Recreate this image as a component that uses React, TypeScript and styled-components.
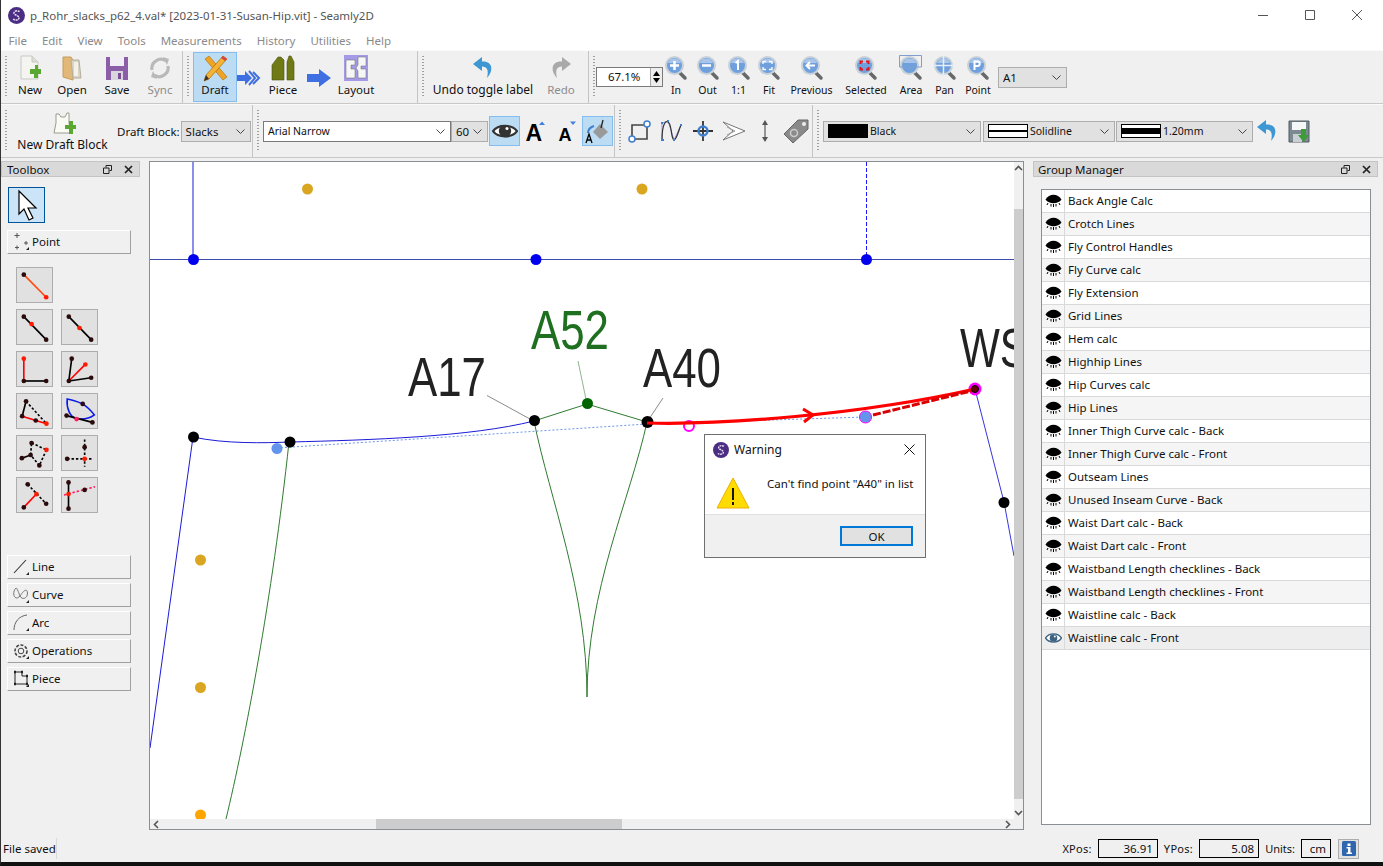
import React from 'react'
import styled, { createGlobalStyle } from 'styled-components'

const menus = ['File', 'Edit', 'View', 'Tools', 'Measurements', 'History', 'Utilities', 'Help']

const groups = [
	'Back Angle Calc', 'Crotch Lines', 'Fly Control Handles', 'Fly Curve calc', 'Fly Extension', 'Grid Lines', 'Hem calc',
	'Highhip Lines', 'Hip Curves calc', 'Hip Lines', 'Inner Thigh Curve calc - Back', 'Inner Thigh Curve calc - Front',
	'Outseam Lines', 'Unused Inseam Curve - Back', 'Waist Dart calc - Back', 'Waist Dart calc - Front',
	'Waistband Length checklines - Back', 'Waistband Length checklines - Front', 'Waistline calc - Back', 'Waistline calc - Front',
]

const DK = '#2a0a0a'
const RD = '#ff1a00'

type Seg = [number, number, number, number, string, boolean?]
type Dot = [number, number, string]
type PointTool = { lines: Seg[]; dots: Dot[]; blue?: string }

const pointTools: (PointTool | null)[] = [
	{ lines: [[7, 6.3, 30, 29.6, '#ff4a10']], dots: [[7, 6.3, DK], [30, 29.6, RD]] },
	null,
	{ lines: [[7, 6.3, 30, 30, '#000']], dots: [[7, 6.3, DK], [15, 14, RD], [30, 30, DK]] },
	{ lines: [[7, 6.3, 30, 30, '#000']], dots: [[7, 6.3, DK], [18, 18, RD], [30, 30, DK]] },
	{ lines: [[7, 6.3, 7, 29.3, '#f00'], [7, 29.3, 30, 29.3, '#000']], dots: [[7, 6.3, RD], [7, 29.3, DK], [30, 29.3, DK]] },
	{ lines: [[7, 29.3, 10, 6.3, '#000'], [7, 29.3, 24, 12.3, '#f00'], [7, 29.3, 30, 26, '#000']], dots: [[10, 6.3, DK], [24, 12.3, RD], [30, 26, DK], [7, 29.3, DK]] },
	{ lines: [[9.3, 7, 5.3, 22.3, '#000'], [9.3, 7, 30.3, 30, '#000', true], [5.3, 22.3, 30.3, 30, '#f00']], dots: [[9.3, 7, DK], [5.3, 22.3, DK], [19.3, 26.7, DK], [30.3, 30, RD]] },
	{ lines: [[4.7, 21.7, 31.3, 28.7, '#000']], dots: [[21.3, 9.7, DK], [4.7, 21.7, DK], [31.3, 28.7, DK], [15, 25.3, '#ff2060']], blue: 'M5.3 4.7C4.5 14 8 23 15 25C22 26 28 25 33.3 21C30 17 25 12 21.3 9.7C16 7.5 10 5.5 5.3 4.7Z' },
	{ lines: [[5, 22.3, 14, 19, '#000'], [15, 6.7, 30.3, 13.7, '#000', true], [30.3, 13.7, 23, 29.7, '#000', true], [23, 29.7, 14, 19, '#000', true], [14, 19, 15, 6.7, '#000', true]], dots: [[15, 6.7, DK], [30.3, 13.7, RD], [23, 29.7, DK], [14, 19, DK], [5, 22.3, DK]] },
	{ lines: [[23.3, 3, 23.3, 31, '#000', true], [5.3, 23, 32, 23, '#000', true]], dots: [[23.3, 11, DK], [5.3, 23, DK], [23.3, 23, RD]] },
	{ lines: [[11, 6, 30, 26, '#000', true], [7, 29.7, 20, 16, '#f00']], dots: [[11, 6, DK], [30, 26, DK], [20, 16, RD], [7, 29.7, DK]] },
	{ lines: [[6.7, 4, 6.7, 31, '#000'], [2, 17, 34, 8.5, '#ff2060', true]], dots: [[6.7, 4, DK], [6.7, 31, DK], [6.7, 16, RD], [23.3, 11.7, DK]] },
]

const Logo = ({ size = 17 }: { size?: number }) => (
	<svg width={size} height={size} viewBox="0 0 17 17">
		<circle cx="8.5" cy="8.5" r="8.5" fill="#4b2e83" />
		<path d="M11.5 4.6C10 3.4 6.4 3.6 6 5.8C5.6 8 11 8.4 11 11C11 13.2 7 13.6 5.2 12.2" fill="none" stroke="#e8e2f2" strokeWidth="1.5" strokeDasharray="2 .7" />
	</svg>
)

const NewIcon = () => (
	<svg width="24" height="28" viewBox="0 0 24 28">
		<path d="M3 2H14L20 8V25H3Z" fill="#f4f4f0" stroke="#c9c9c4" />
		<path d="M14 2V8H20" fill="#dcdcd6" stroke="#c9c9c4" />
		<path d="M13 15H18V11H18H21V15H24V20H21V24H17V20H13Z" fill="#5aa832" transform="translate(-1 0)" />
	</svg>
)

const OpenIcon = () => (
	<svg width="24" height="28" viewBox="0 0 24 28">
		<path d="M3 3H11L13 6V26L3 23Z" fill="#e2b878" stroke="#c59c5c" />
		<path d="M11 6H19L21 24H13Z" fill="#d9d4c6" stroke="#b3ae9f" />
		<path d="M14 8H18V22H14Z" fill="#f4f1e8" />
	</svg>
)

const SaveIcon = () => (
	<svg width="26" height="28" viewBox="0 0 26 28">
		<path d="M2 3H24V26H2Z" fill="#8d5ea8" />
		<path d="M6 3H20V12H6Z" fill="#f2eef5" />
		<path d="M7 17H19V26H7Z" fill="#d9d5dc" />
		<path d="M14 19H17V25H14Z" fill="#7b4e96" />
	</svg>
)

const SyncIcon = () => (
	<svg width="26" height="28" viewBox="0 0 26 28" fill="none" stroke="#b9b9b9" strokeWidth="3.2">
		<path d="M5 16A9 9 0 0 1 19 7" />
		<path d="M21 12A9 9 0 0 1 7 21" />
		<path d="M16 3L22 5L20 11Z" fill="#b9b9b9" stroke="none" />
		<path d="M10 25L4 23L6 17Z" fill="#b9b9b9" stroke="none" />
	</svg>
)

const DraftIcon = () => (
	<svg width="28" height="30" viewBox="0 0 28 30">
		<path d="M4 6L8 3L26 24L22 27Z" fill="#f0a424" stroke="#b87510" strokeWidth=".7" />
		<path d="M22 3L26 6L8 26L3 28L5 22Z" fill="#f5b335" stroke="#a96c12" strokeWidth=".7" />
		<path d="M22 3L26 6L24 8L20 5Z" fill="#d8443a" />
		<path d="M3 28L5 22L8 26Z" fill="#3c3228" />
	</svg>
)

const DoubleArrow = () => (
	<svg width="24" height="16" viewBox="0 0 24 16">
		<path d="M0 5H8V1L15 8L8 15V11H0Z" fill="#3f6fe0" />
		<path d="M16 2L22 8L16 14M12 1L18 8L12 15" fill="none" stroke="#3f6fe0" strokeWidth="2" />
	</svg>
)

const BigArrow = () => (
	<svg width="24" height="18" viewBox="0 0 24 18">
		<path d="M0 5H12V0L24 9L12 18V13H0Z" fill="#3f6fe0" />
	</svg>
)

const PieceIcon = () => (
	<svg width="26" height="28" viewBox="0 0 26 28">
		<path d="M2 26V11L8 3H11L14 6V26Z" fill="#6f7a14" stroke="#4b5210" strokeWidth=".6" />
		<path d="M17 26V8L19 2H21L24 8V26Z" fill="#6f7a14" stroke="#4b5210" strokeWidth=".6" />
	</svg>
)

const LayoutIcon = () => (
	<svg width="26" height="28" viewBox="0 0 26 28">
		<path d="M1 1H25V27H1Z" fill="#a59ae8" />
		<path d="M3 6H12V11H8V15H12V24H3Z" fill="#f6f6f6" stroke="#666" strokeWidth=".5" />
		<path d="M15 3H23V12H18V15H23V24H15V17L13 14L15 11Z" fill="#f6f6f6" stroke="#666" strokeWidth=".5" />
	</svg>
)

const UndoIcon = ({ color = '#3d97d3' }: { color?: string }) => (
	<svg width="22" height="24" viewBox="0 0 22 24">
		<path d="M10 1L1 8L10 15V10.500C15 10.500 17 14 15 22C21 16 22 5 10 5.500Z" fill={color} />
	</svg>
)

const RedoIcon = () => (
	<svg width="22" height="24" viewBox="0 0 22 24">
		<path d="M12 1L21 8L12 15V10.500C7 10.500 5 14 7 22C1 16 0 5 12 5.500Z" fill="#a9a9a9" />
	</svg>
)

const ZoomGlass = ({ children }: { children?: React.ReactNode }) => (
	<svg width="24" height="26" viewBox="0 0 24 26">
		<path d="M15 17L21 23" stroke="#66686a" strokeWidth="3.500" strokeLinecap="round" />
		<circle cx="10.500" cy="10.500" r="9.500" fill="#c8d0d8" />
		<circle cx="10.500" cy="10.500" r="7.500" fill="#6f9fdc" />
		<path d="M4 8A7 7 0 0 1 17 8Z" fill="#a9c6ea" />
		{children}
	</svg>
)

const zoomTools: { label: string; w: number; mark: React.ReactNode }[] = [
	{ label: 'In', w: 32, mark: <path d="M10.500 6V15M6 10.500H15" stroke="#fff" strokeWidth="2.500" /> },
	{ label: 'Out', w: 31, mark: <path d="M6 10.500H15" stroke="#fff" strokeWidth="2.500" /> },
	{ label: '1:1', w: 31, mark: <path d="M8.500 8L11 6V15" fill="none" stroke="#fff" strokeWidth="2" /> },
	{ label: 'Fit', w: 30, mark: <path d="M6 9V6.500H9M12 6.500H15V9M15 12V14.500H12M9 14.500H6V12" fill="none" stroke="#fff" strokeWidth="1.300" /> },
	{ label: 'Previous', w: 55, mark: <path d="M15 10.500H7M10 7L6.500 10.500L10 14" fill="none" stroke="#fff" strokeWidth="2" /> },
	{ label: 'Selected', w: 54, mark: <path d="M6.500 9V6.500H9M12 6.500H14.500V9M14.500 12V14.500H12M9 14.500H6.500V12" fill="none" stroke="#e0141c" strokeWidth="2" /> },
	{ label: 'Area', w: 36, mark: <path d="M0.500 0.500H22.500V12H0.500Z" fill="none" stroke="#7f9fcf" /> },
	{ label: 'Pan', w: 31, mark: <path d="M10.500 1V20M1 10.500H20" stroke="#e8eef8" strokeWidth="1.500" /> },
	{ label: 'Point', w: 36, mark: <path d="M8.500 15V6.500H12A2.300 2.300 0 0 1 12 11H8.500" fill="none" stroke="#fff" strokeWidth="2" /> },
]

const FontSizeIcon = ({ size, x, up }: { size: number; x: number; up: boolean }) => (
	<svg width="28" height="32" viewBox="0 0 28 32">
		<text x={x} y="25.500" fontFamily="'Liberation Sans', sans-serif" fontWeight="700" fontSize={size} fill="#000">A</text>
		<path d={up ? 'M17 10L20 6.500L23 10Z' : 'M17 6.500H23L20 10Z'} fill="#3f7fe0" />
	</svg>
)

const EyeIcon = ({ color = '#333', w = 26 }: { color?: string; w?: number }) => (
	<svg width={w} height={w * 0.7} viewBox="0 0 26 18">
		<path d="M1 9C6 2 20 2 25 9C20 16 6 16 1 9Z" fill="#fff" stroke={color} strokeWidth="2.200" />
		<circle cx="13" cy="9" r="6.200" fill={color} />
		<circle cx="15" cy="6.500" r="1.500" fill="#fff" />
	</svg>
)

const ClosedEye = () => (
	<svg width="17" height="14" viewBox="0 0 17 14">
		<path d="M0.500 5.500C4 -1 13 -1 16.500 5.500C13 10.500 4 10.500 0.500 5.500Z" fill="#000" />
		<path d="M3 9L2 11M6 10V12.500M8.500 10V13M11 10V12.500M14 9L15 11" stroke="#000" />
	</svg>
)

const BlueEye = () => (
	<svg width="17" height="14" viewBox="0 0 17 14">
		<path d="M0.500 7C4 1.500 13 1.500 16.500 7C13 12.500 4 12.500 0.500 7Z" fill="#fff" stroke="#3d6380" strokeWidth="1.400" />
		<circle cx="8.500" cy="7" r="3.800" fill="#3d6380" />
		<circle cx="9.800" cy="5.500" r="1" fill="#fff" />
	</svg>
)

const rowTwoIcons = [
	<svg width="26" height="26" viewBox="0 0 26 26" key="a">
		<path d="M4 7H19V21H4Z" fill="none" stroke="#444" strokeWidth="1.600" />
		<circle cx="19" cy="6" r="3" fill="#fff" stroke="#3f7fd0" strokeWidth="1.500" />
		<circle cx="4" cy="21" r="3" fill="#fff" stroke="#3f7fd0" strokeWidth="1.500" />
	</svg>,
	<svg width="26" height="26" viewBox="0 0 26 26" key="b">
		<path d="M3 23V5L9 3L15 22L22 7" fill="none" stroke="#8a7fe0" strokeWidth=".8" />
		<path d="M3 23C3 5 7 1 10 5C13 9 12 21 15 22C18 21 19 14 22 7" fill="none" stroke="#333" strokeWidth="1.200" />
		<path d="M3 23V21H5V23ZM2 6V4H4V6ZM8 4V2H10V4ZM14 23V21H16V23ZM21 8V6H23V8Z" fill="#3f7fd0" />
	</svg>,
	<svg width="26" height="26" viewBox="0 0 26 26" key="c">
		<path d="M13 3V23M3 13H23" stroke="#333" strokeWidth="1.800" />
		<circle cx="13" cy="13" r="4.500" fill="none" stroke="#3f7fd0" strokeWidth="2.400" />
	</svg>,
	<svg width="26" height="26" viewBox="0 0 26 26" key="d">
		<path d="M2 4L24 13L2 22L12 13Z" fill="#fff" stroke="#777" strokeWidth="1" />
		<path d="M6 9L14 13L6 17" fill="none" stroke="#999" />
	</svg>,
	<svg width="14" height="26" viewBox="0 0 14 26" key="e">
		<path d="M7 4V22" stroke="#777" strokeWidth="1.500" />
		<path d="M7 2L10 7H4ZM7 24L10 19H4Z" fill="#555" />
	</svg>,
	<svg width="28" height="26" viewBox="0 0 28 26" key="f">
		<path d="M2 16L16 2H26V11L11 25Z" fill="#8a8a8a" stroke="#666" />
		<circle cx="22" cy="6" r="2" fill="#eee" />
		<circle cx="12" cy="15" r="3.500" fill="none" stroke="#ccc" strokeWidth="1.500" />
	</svg>,
]

const toolGroups: { label: string; icon: React.ReactNode }[] = [
	{ label: 'Line', icon: <path d="M2 16L14 3" stroke="#333" strokeWidth="1.100" /> },
	{ label: 'Curve', icon: <path d="M4 3C-1 8 3 17 8 11C12 5 15 3 15.500 8C15.500 14 10 15 8 11C6 6 5 3 4 3Z" fill="none" stroke="#777" /> },
	{ label: 'Arc', icon: <path d="M2 17C2 9 7 3 15 2" fill="none" stroke="#666" /> },
	{ label: 'Operations', icon: <g fill="none" stroke="#444"><circle cx="9" cy="10" r="2.800" /><circle cx="9" cy="10" r="6" strokeDasharray="3 1.500" strokeWidth="1.600" /></g> },
	{ label: 'Piece', icon: <g fill="none" stroke="#222"><path d="M3 3V15H15V7H10V3Z" /><path d="M2 3H4M2 15H4M14 15H16M9 3H11M14 7H16" strokeWidth="2.400" /></g> },
]

const PointIcon = () => (
	<svg width="20" height="20" viewBox="0 0 20 20">
		<path d="M5 1V6M2.500 3.500H7.500M3 15.500H7M5 13.500V17.500M14 9V13M12 11H16" stroke="#555" />
	</svg>
)

const Canvas = () => (
	<svg width="100%" height="100%" viewBox="150 162 864 657" preserveAspectRatio="none">
		<g fill="none">
			<path d="M193 162V259" stroke="#1a1ad8" />
			<path d="M866.500 162V259" stroke="#1a1aff" strokeDasharray="4 2" />
			<path d="M150 259.500H1014" stroke="#3c4ca8" />
			<path d="M193 437C225 444 265 443 290 442C370 440 470 437 534 421" stroke="#1a1ad8" />
			<path d="M193 437L150 748" stroke="#1a1ad8" />
			<path d="M975 389L1004 502L1014 556" stroke="#3535e0" />
			<path d="M534 421L587 404L647 422" stroke="#2f7a2f" />
			<path d="M534 421C550 500 587 590 587 697C587 590 630 500 647 422" stroke="#2f7a2f" />
			<path d="M289 442C272 600 245 740 226 819" stroke="#2f7a2f" />
			<path d="M277 448L647 424L865 417" stroke="#6d96e8" strokeDasharray="2 2" />
			<path d="M487 395.500L530 419M663 398L647 422" stroke="#8c8c8c" />
			<path d="M578 361L587 404" stroke="#90b490" />
		</g>
		<g fontFamily="'Liberation Sans', Arial, sans-serif" fontSize="55" fill="#222">
			<text x="408" y="396" textLength="78" lengthAdjust="spacingAndGlyphs">A17</text>
			<text x="531" y="349" textLength="78" lengthAdjust="spacingAndGlyphs" fill="#1e7020">A52</text>
			<text x="643" y="387" textLength="78" lengthAdjust="spacingAndGlyphs">A40</text>
			<text x="960" y="367" textLength="68" lengthAdjust="spacingAndGlyphs">WS</text>
		</g>
		<g fill="#daa520">
			<circle cx="307.500" cy="189" r="5.500" />
			<circle cx="642" cy="189" r="5.500" />
			<circle cx="200.500" cy="560" r="5.500" />
			<circle cx="200.500" cy="687.500" r="5.500" />
			<circle cx="200.500" cy="815" r="5.500" fill="#ffa500" />
		</g>
		<g fill="#0000ee">
			<circle cx="193.500" cy="259.500" r="5.500" />
			<circle cx="536" cy="259.500" r="5.500" />
			<circle cx="866.500" cy="259.500" r="5.500" />
		</g>
		<g fill="#000">
			<circle cx="193.500" cy="437" r="5.500" />
			<circle cx="290" cy="442" r="5.500" />
			<circle cx="534.500" cy="420.500" r="5.500" />
			<circle cx="647.500" cy="422" r="6" />
			<circle cx="1004" cy="502.500" r="5.500" />
		</g>
		<circle cx="587.500" cy="403.500" r="5.500" fill="#006400" />
		<circle cx="277" cy="448.500" r="5.500" fill="#6495ed" />
		<circle cx="865.500" cy="417" r="6" fill="#6495ed" stroke="#f0f" />
		<circle cx="689" cy="426" r="5" fill="#fff" stroke="#f0f" strokeWidth="2" />
		<circle cx="975" cy="389" r="6.500" fill="#f0f" />
		<g fill="none">
			<path d="M647 423C720 425 860 415 975 389" stroke="#f00" strokeWidth="3.200" />
			<path d="M803 409L813 415L804 422" stroke="#f00" strokeWidth="3" />
			<path d="M873 415L975 390" stroke="#d80000" strokeWidth="3" strokeDasharray="8 2" />
		</g>
		<circle cx="975" cy="389" r="3.500" fill="#600" stroke="#000" />
	</svg>
)

const App = () => {
	return (
		<Frame>
			<GlobalStyle />
			<TitleBar>
				<TitleLeft>
					<Logo />
					<span>p_Rohr_slacks_p62_4.val* [2023-01-31-Susan-Hip.vit] - Seamly2D</span>
				</TitleLeft>
				<WindowButtons>
					<svg width="10" height="10" viewBox="0 0 10 10"><path d="M0 5.500H10" stroke="#555" /></svg>
					<svg width="10" height="10" viewBox="0 0 10 10"><path d="M.5 .5H9.500V9.500H.5Z" fill="none" stroke="#555" /></svg>
					<svg width="10" height="10" viewBox="0 0 10 10"><path d="M0 0L10 10M10 0L0 10" stroke="#555" /></svg>
				</WindowButtons>
			</TitleBar>

			<MenuBar>
				{menus.map((m) => <MenuItem key={m}>{m}</MenuItem>)}
			</MenuBar>

			<ToolRow>
				<Section $w={182}>
					<Handle />
					<ToolButton $w={36}><IconSlot><NewIcon /></IconSlot>New</ToolButton>
					<ToolButton $w={48}><IconSlot><OpenIcon /></IconSlot>Open</ToolButton>
					<ToolButton $w={42}><IconSlot><SaveIcon /></IconSlot>Save</ToolButton>
					<ToolButton $w={44} $muted><IconSlot><SyncIcon /></IconSlot>Sync</ToolButton>
				</Section>
				<Section $w={235}>
					<Handle />
					<ToolButton $w={44} $active $gapLeft={-1}><IconSlot><DraftIcon /></IconSlot>Draft</ToolButton>
					<ArrowSlot $w={23}><DoubleArrow /></ArrowSlot>
					<ToolButton $w={44}><IconSlot><PieceIcon /></IconSlot>Piece</ToolButton>
					<ArrowSlot $w={27}><BigArrow /></ArrowSlot>
					<ToolButton $w={48}><IconSlot><LayoutIcon /></IconSlot>Layout</ToolButton>
				</Section>
				<Section $w={171}>
					<Handle />
					<ToolButton $w={106} $gapLeft={1} $size={12}><IconSlot><UndoIcon /></IconSlot>Undo toggle label</ToolButton>
					<ToolButton $w={42} $muted $gapLeft={4}><IconSlot><RedoIcon /></IconSlot>Redo</ToolButton>
				</Section>
				<Section $grow>
					<Handle />
					<SpinBox>
						<span>67.1%</span>
						<SpinArrows>
							<svg width="9" height="7" viewBox="0 0 9 7"><path d="M4.500 1L8 6H1Z" fill="#000" /></svg>
							<svg width="9" height="7" viewBox="0 0 9 7"><path d="M4.500 6L8 1H1Z" fill="#000" /></svg>
						</SpinArrows>
					</SpinBox>
					<ZoomTools>
						{zoomTools.map((t) => (
							<ToolButton key={t.label} $w={t.w} $size={10.5}><IconSlot><ZoomGlass>{t.mark}</ZoomGlass></IconSlot>{t.label}</ToolButton>
						))}
					</ZoomTools>
					<Select $w={69} $gapLeft={2}>A1<Chevron /></Select>
				</Section>
			</ToolRow>

			<ToolRow>
				<Section $w={252}>
					<Handle />
					<DraftButton>
						<svg width="26" height="26" viewBox="0 0 26 26">
							<path d="M6 3H9L11 6L15 6L17 2H19V12L21 22H4L6 12Z" fill="#fbfbf6" stroke="#9a9a8f" />
							<path d="M15 14H19V10H23V14H26V18H23V23H19V18H15Z" fill="#5aa832" />
						</svg>
						New Draft Block
					</DraftButton>
					<FieldLabel>Draft Block:</FieldLabel>
					<Select $w={70} $gapLeft={1}>Slacks<Chevron /></Select>
				</Section>
				<Section $w={362}>
					<Handle />
					<Select $w={188} $white $small $gapLeft={-1}>Arial Narrow<Chevron /></Select>
					<Select $w={37}>60<Chevron /></Select>
					<IconButton $active $gapLeft={1}><EyeIcon /></IconButton>
					<IconPad $w={32}><FontSizeIcon size={23} x={3.5} up /></IconPad>
					<IconPad $w={30}><FontSizeIcon size={18} x={5.5} up={false} /></IconPad>
					<IconButton $active>
						<svg width="26" height="26" viewBox="0 0 26 26">
							<path d="M15 6L23 14L15 21L8 14Z" fill="#999" />
							<path d="M16 10L18 2" stroke="#222" strokeWidth="1.300" />
							<path d="M3 15C3 11 6 9 9 8" fill="none" stroke="#3f7fd0" strokeWidth="2" />
							<path d="M1 25L4 16L7 25M2.200 22H5.800" fill="none" stroke="#000" strokeWidth="1.300" />
						</svg>
					</IconButton>
				</Section>
				<Section $w={198} $pad={10}>
					<Handle />
					{rowTwoIcons.map((icon) => <IconPad key={icon.key} $w={31}>{icon}</IconPad>)}
				</Section>
				<Section $grow $flat>
					<Handle />
					<Select $w={158} $gapLeft={-1} $small>
						<LineSwatch $kind="color" />Black<Chevron />
					</Select>
					<Select $w={132} $gapLeft={2} $small>
						<LineSwatch $kind="line" />Solidline<Chevron />
					</Select>
					<Select $w={137} $gapLeft={1} $small>
						<LineSwatch $kind="weight" />1.20mm<Chevron />
					</Select>
					<IconPad $w={28}><UndoIcon /></IconPad>
					<IconPad $w={28} $gapLeft={4}>
						<svg width="22" height="24" viewBox="0 0 22 24">
							<path d="M1 2H21V23H1Z" fill="#7d8a92" stroke="#4f5a62" />
							<path d="M4 3H18V11H4Z" fill="#f4f6f7" />
							<path d="M5 15H14V23H5Z" fill="#c9d0d4" />
							<path d="M13 10H18V16H21L15.500 23L10 16H13Z" fill="#3f9a3a" />
						</svg>
					</IconPad>
				</Section>
			</ToolRow>

			<Main>
				<Toolbox>
					<DockHeader $w={139}>
						Toolbox
						<DockActions><DockIcons /></DockActions>
					</DockHeader>
					<ArrowTool>
						<svg width="28" height="34" viewBox="0 0 28 34">
							<path d="M6 3V26L11 21L16 32L20 30L15 20H23Z" fill="#fff" stroke="#000" strokeWidth="1.200" />
						</svg>
					</ArrowTool>
					<GroupButton $mt={7}><IconLeft><PointIcon /></IconLeft>Point<Corner /></GroupButton>
					<PointGrid>
						{pointTools.map((tool, i) => tool ? (
							<PointButton key={i}>
								<svg width="36" height="36" viewBox="0 0 36 36">
									{tool.blue && <path d={tool.blue} fill="none" stroke="#0a1ae8" strokeWidth="1.600" />}
									{tool.lines.map((s, j) => (
										<line key={j} x1={s[0]} y1={s[1]} x2={s[2]} y2={s[3]} stroke={s[4]} strokeWidth="1.700" strokeDasharray={s[5] ? '2.500 2' : undefined} />
									))}
									{tool.dots.map((d, j) => <circle key={j} cx={d[0]} cy={d[1]} r="2.400" fill={d[2]} />)}
								</svg>
							</PointButton>
						) : <span key={i} />)}
					</PointGrid>
					<GroupList>
						{toolGroups.map((g) => (
							<GroupButton key={g.label}>
								<IconLeft><svg width="18" height="20" viewBox="0 0 18 20">{g.icon}</svg></IconLeft>
								{g.label}
								<Corner />
							</GroupButton>
						))}
					</GroupList>
				</Toolbox>

				<CanvasFrame>
					<CanvasArea><Canvas /></CanvasArea>
					<VScroll>
						<ScrollChevron><svg width="9" height="6" viewBox="0 0 9 6"><path d="M1 5L4.500 1.500L8 5" fill="none" stroke="#555" strokeWidth="1.600" /></svg></ScrollChevron>
						<VThumb />
						<ScrollChevron $end><svg width="9" height="6" viewBox="0 0 9 6"><path d="M1 1L4.500 4.500L8 1" fill="none" stroke="#555" strokeWidth="1.600" /></svg></ScrollChevron>
					</VScroll>
					<HScroll>
						<ScrollChevron><svg width="6" height="9" viewBox="0 0 6 9"><path d="M5 1L1.500 4.500L5 8" fill="none" stroke="#555" strokeWidth="1.600" /></svg></ScrollChevron>
						<HThumb />
						<ScrollChevron><svg width="6" height="9" viewBox="0 0 6 9"><path d="M1 1L4.500 4.500L1 8" fill="none" stroke="#555" strokeWidth="1.600" /></svg></ScrollChevron>
					</HScroll>
					<ScrollCorner />
				</CanvasFrame>

				<GroupPanel>
					<DockHeader $w={345} $tight>
						Group Manager
						<DockActions><DockIcons /></DockActions>
					</DockHeader>
					<GroupTable>
						{groups.map((g, i) => {
							const last = i === groups.length - 1
							return (
								<GroupRow key={g} $odd={i % 2 === 1} $selected={last}>
									<EyeCell>{last ? <BlueEye /> : <ClosedEye />}</EyeCell>
									<NameCell>{g}</NameCell>
								</GroupRow>
							)
						})}
					</GroupTable>
				</GroupPanel>
			</Main>

			<StatusBar>
				<StatusMessage>File saved</StatusMessage>
				<StatusRight>
					<StatusLabel $wide>XPos:</StatusLabel>
					<ValueBox $w={60}>36.91</ValueBox>
					<StatusLabel $wide>YPos:</StatusLabel>
					<ValueBox $w={60}>5.08</ValueBox>
					<StatusLabel>Units:</StatusLabel>
					<ValueBox $w={30}>cm</ValueBox>
					<InfoButton>
						<svg width="14" height="15" viewBox="0 0 14 15">
							<path d="M0 1.500Q0 0 1.500 0H12.500Q14 0 14 1.500V13.500Q14 15 12.500 15H1.500Q0 15 0 13.500Z" fill="#2f66ad" />
							<path d="M5.500 2.500H8.500V5H5.500ZM4.500 6H8.500V11.500H10V13H4.500V11.500H6V7.500H4.500Z" fill="#fff" />
						</svg>
					</InfoButton>
				</StatusRight>
			</StatusBar>

			<Dialog>
				<DialogTitle>
					<Logo size={16} />
					<span>Warning</span>
					<DialogClose>
						<svg width="11" height="11" viewBox="0 0 11 11"><path d="M.5 .5L10.500 10.500M10.500 .5L.5 10.500" stroke="#111" /></svg>
					</DialogClose>
				</DialogTitle>
				<DialogBody>
					<svg width="34" height="32" viewBox="0 0 34 32">
						<path d="M17 1L33 31H1Z" fill="#ffdc00" stroke="#eeb000" />
						<path d="M17 11V23M17 25V28" stroke="#000" strokeWidth="1.800" />
					</svg>
					<span>Can't find point "A40" in list</span>
				</DialogBody>
				<DialogFooter>
					<OkButton>OK</OkButton>
				</DialogFooter>
			</Dialog>
		</Frame>
	)
}

const DockIcons = () => (
	<>
		<svg width="9" height="9" viewBox="0 0 9 9"><path d="M3 2.500V.5H8.500V5.500H6.500M.5 3H6V8.500H.5Z" fill="none" stroke="#222" /></svg>
		<svg width="9" height="9" viewBox="0 0 9 9"><path d="M1 1L8 8M8 1L1 8" stroke="#222" strokeWidth="1.700" /></svg>
	</>
)

const Chevron = () => (
	<ChevronBox>
		<svg width="9" height="6" viewBox="0 0 9 6"><path d="M.5 .5L4.500 4.500L8.500 .5" fill="none" stroke="#444" /></svg>
	</ChevronBox>
)

const GlobalStyle = createGlobalStyle`
	html, body {
		margin: 0;
		padding: 0;
		height: 100%;
		overflow: hidden;
		background: #111;
	}
	* {
		box-sizing: border-box;
	}
`

const Frame = styled.div`
	position: relative;
	width: 1383px;
	height: 866px;
	display: flex;
	flex-direction: column;
	background: #f0f0f0;
	border-left: 1px solid #333;
	border-bottom: 4px solid #111;
	font-family: 'Noto Sans', 'Open Sans', sans-serif;
	font-size: 11.5px;
	color: #111;
	overflow: hidden;
`

const TitleBar = styled.div`
	height: 30px;
	margin-left: -1px;
	padding-left: 8px;
	display: flex;
	align-items: center;
	justify-content: space-between;
	background: #fff;
	color: #555;
	font-size: 11.5px;
	letter-spacing: -0.03px;
`

const TitleLeft = styled.div`
	display: flex;
	align-items: center;
	gap: 5px;
`

const WindowButtons = styled.div`
	display: flex;
	align-items: center;
	gap: 37px;
	padding-right: 21px;
`

const MenuBar = styled.div`
	height: 20px;
	margin-left: -1px;
	padding-left: 1px;
	display: flex;
	align-items: center;
	background: #fff;
`

const MenuItem = styled.div`
	padding: 0 7.500px;
	color: #8a8a8a;
	font-size: 11.5px;
`

const ToolRow = styled.div`
	height: 54px;
	display: flex;
	border-bottom: 1px solid #c8c8c8;
	border-top: 1px solid #fafafa;
`

const Section = styled.div<{ $w?: number; $grow?: boolean; $flat?: boolean; $pad?: number }>`
	position: relative;
	display: flex;
	align-items: center;
	padding-left: ${(p) => p.$pad || 11}px;
	flex: ${(p) => (p.$grow ? '1' : `0 0 ${p.$w}px`)};
	border-right: ${(p) => (p.$grow ? 'none' : '1px solid #c4c4c4')};
`

const Handle = styled.div`
	position: absolute;
	left: 4px;
	top: 5px;
	bottom: 5px;
	width: 2px;
	background-image: linear-gradient(#a0a0a0 50%, transparent 50%);
	background-size: 2px 3px;
`

const ToolButton = styled.div<{ $w: number; $active?: boolean; $muted?: boolean; $gapLeft?: number; $size?: number }>`
	flex: 0 0 ${(p) => p.$w}px;
	height: 50px;
	margin-left: ${(p) => p.$gapLeft || 0}px;
	display: flex;
	flex-direction: column;
	align-items: center;
	justify-content: flex-end;
	padding-bottom: 3px;
	white-space: nowrap;
	font-size: ${(p) => p.$size || 11.5}px;
	color: ${(p) => (p.$muted ? '#8c8c8c' : '#111')};
	background: ${(p) => (p.$active ? '#bcdcf4' : 'transparent')};
	border: 1px solid ${(p) => (p.$active ? '#84bef0' : 'transparent')};
	line-height: 16px;
`

const IconSlot = styled.div`
	height: 29px;
	display: flex;
	align-items: center;
	justify-content: center;
`

const ArrowSlot = styled.div<{ $w: number }>`
	flex: 0 0 ${(p) => p.$w}px;
	display: flex;
	justify-content: center;
	padding-top: 2px;
`

const SpinBox = styled.div`
	flex: 0 0 67px;
	height: 20px;
	margin-left: -4px;
	padding-left: 11px;
	display: flex;
	align-items: center;
	justify-content: space-between;
	background: #fff;
	border: 1px solid #7a7a7a;
	margin-top: -1px;
`

const SpinArrows = styled.div`
	width: 12px;
	height: 18px;
	display: flex;
	flex-direction: column;
	align-items: center;
	justify-content: center;
	background: #ededed;
	border-left: 1px solid #aaa;
`

const ZoomTools = styled.div`
	display: flex;
	margin-left: -3px;
`

const Select = styled.div<{ $w: number; $white?: boolean; $small?: boolean; $gapLeft?: number }>`
	position: relative;
	flex: 0 0 ${(p) => p.$w}px;
	height: 21px;
	margin-left: ${(p) => p.$gapLeft || 0}px;
	padding-left: 4px;
	display: flex;
	align-items: center;
	background: ${(p) => (p.$white ? '#fff' : '#e1e1e1')};
	border: 1px solid ${(p) => (p.$white ? '#7a7a7a' : '#adadad')};
	font-size: ${(p) => (p.$small ? '10.500px' : '11.500px')};
`

const ChevronBox = styled.span`
	position: absolute;
	right: 5px;
	top: 7px;
	display: flex;
`

const DraftButton = styled.div`
	flex: 0 0 105px;
	display: flex;
	flex-direction: column;
	align-items: center;
	line-height: 16px;
	padding-top: 1px;
	margin-left: -2px;
	font-size: 12px;
	white-space: nowrap;
`

const FieldLabel = styled.div`
	white-space: nowrap;
	margin-left: 2px;
`

const IconButton = styled.div<{ $active?: boolean; $gapLeft?: number }>`
	flex: 0 0 31px;
	height: 30px;
	margin-left: ${(p) => p.$gapLeft || 0}px;
	display: flex;
	align-items: center;
	justify-content: center;
	background: ${(p) => (p.$active ? '#bcdcf4' : 'transparent')};
	border: 1px solid ${(p) => (p.$active ? '#84bef0' : 'transparent')};
`

const IconPad = styled.div<{ $w: number; $gapLeft?: number }>`
	flex: 0 0 ${(p) => p.$w}px;
	margin-left: ${(p) => p.$gapLeft || 0}px;
	display: flex;
	align-items: center;
	justify-content: center;
`

const LineSwatch = styled.span<{ $kind: 'color' | 'line' | 'weight' }>`
	flex: 0 0 40px;
	height: 14px;
	margin-right: 2px;
	border: 1px solid #000;
	background: ${(p) =>
		p.$kind === 'color'
			? '#000'
			: p.$kind === 'line'
				? 'linear-gradient(#fff 5px, #000 5px, #000 7px, #fff 7px)'
				: 'linear-gradient(#fff 3px, #000 3px, #000 9px, #fff 9px)'};
`

const Main = styled.div`
	flex: 1;
	display: flex;
	min-height: 0;
`

const Toolbox = styled.div`
	flex: 0 0 148px;
	padding-top: 3px;
	display: flex;
	flex-direction: column;
`

const DockHeader = styled.div<{ $w: number; $tight?: boolean }>`
	width: ${(p) => p.$w}px;
	height: 16px;
	padding: 0 6px 0 ${(p) => (p.$tight ? 4 : 5)}px;
	display: flex;
	align-items: center;
	justify-content: space-between;
	background: #d9d9d9;
	border: 1px solid #c4c4c4;
	flex: none;
`

const DockActions = styled.div`
	display: flex;
	align-items: center;
	gap: 12px;
	padding-right: 0;
`

const ArrowTool = styled.div`
	width: 37px;
	height: 36px;
	margin: 10px 0 0 7px;
	display: flex;
	align-items: center;
	justify-content: center;
	background: #cce4f7;
	border: 1px solid #005499;
`

const GroupButton = styled.div<{ $mt?: number }>`
	position: relative;
	width: 124px;
	height: 24px;
	margin: ${(p) => p.$mt || 0}px 0 0 6px;
	padding: 0 0 2px 24px;
	display: flex;
	align-items: center;
	background: #f0f0f0;
	border: 1px solid;
	border-color: #fff #a0a0a0 #a0a0a0 #fff;
`

const IconLeft = styled.span`
	position: absolute;
	left: 4px;
	top: 1px;
	display: flex;
`

const Corner = styled.span`
	position: absolute;
	left: 18px;
	bottom: 3px;
	border-style: solid;
	border-width: 0 0 3px 3px;
	border-color: transparent transparent #222 transparent;
`

const PointGrid = styled.div`
	display: grid;
	grid-template-columns: 37px 37px;
	grid-auto-rows: 36px;
	column-gap: 8px;
	row-gap: 6px;
	margin: 13px 0 0 15px;
`

const PointButton = styled.div`
	background: #e1e1e1;
	border: 1px solid #adadad;
	display: flex;
`

const GroupList = styled.div`
	margin-top: 42px;
	display: flex;
	flex-direction: column;
	gap: 4px;
`

const CanvasFrame = styled.div`
	flex: 0 0 875px;
	height: 669px;
	margin-top: 3px;
	display: grid;
	grid-template-columns: 1fr 9px;
	grid-template-rows: 1fr 10px;
	border: 1px solid #8a8f94;
	background: #fff;
`

const CanvasArea = styled.div`
	min-width: 0;
	min-height: 0;
	overflow: hidden;
	display: flex;
`

const VScroll = styled.div`
	display: flex;
	flex-direction: column;
	background: #f0f0f0;
`

const HScroll = styled.div`
	display: flex;
	align-items: stretch;
	background: #f0f0f0;
`

const ScrollChevron = styled.div<{ $end?: boolean }>`
	flex: 0 0 12px;
	display: flex;
	align-items: center;
	justify-content: center;
	margin-top: ${(p) => (p.$end ? 'auto' : '0')};
`

const VThumb = styled.div`
	flex: 0 0 590px;
	margin-top: 35px;
	background: #cdcdcd;
`

const HThumb = styled.div`
	flex: 0 0 246px;
	margin-left: 214px;
	margin-right: auto;
	background: #cdcdcd;
`

const ScrollCorner = styled.div`
	background: #f0f0f0;
`

const GroupPanel = styled.div`
	flex: 1;
	padding: 3px 0 0 9px;
	display: flex;
	flex-direction: column;
`

const GroupTable = styled.div`
	width: 330px;
	height: 636px;
	margin: 12px 0 0 8px;
	background: #fff;
	border: 1px solid #8a8f94;
`

const GroupRow = styled.div<{ $odd?: boolean; $selected?: boolean }>`
	height: 23px;
	display: flex;
	background: ${(p) => (p.$selected ? '#eeeeee' : p.$odd ? '#f5f5f5' : '#fff')};
	border-bottom: 1px solid #d9d9d9;
`

const EyeCell = styled.div`
	flex: 0 0 23px;
	display: flex;
	align-items: center;
	justify-content: center;
	border-right: 1px solid #d9d9d9;
`

const NameCell = styled.div`
	padding: 0 0 1px 3px;
	display: flex;
	align-items: center;
`

const StatusBar = styled.div`
	height: 24px;
	flex: none;
	display: flex;
	align-items: center;
	justify-content: space-between;
	padding: 0 24px 3px 2px;
`

const StatusMessage = styled.div`
	height: 21px;
	width: 54px;
	display: flex;
	align-items: center;
	border-right: 1px solid #d9d9d9;
`

const StatusRight = styled.div`
	display: flex;
	align-items: center;
	gap: 6px;
	font-size: 11px;
`

const StatusLabel = styled.span<{ $wide?: boolean }>`
	letter-spacing: ${(p) => (p.$wide ? '0.3px' : '0')};
`

const ValueBox = styled.div<{ $w: number }>`
	width: ${(p) => p.$w}px;
	height: 19px;
	padding-right: 4px;
	display: flex;
	align-items: center;
	justify-content: flex-end;
	border: 1px solid #000;
	font-size: 11.5px;
`

const InfoButton = styled.div`
	width: 21px;
	height: 20px;
	margin-left: 1px;
	display: flex;
	align-items: center;
	justify-content: center;
	background: #e1e1e1;
	border: 1px solid #adadad;
`

const Dialog = styled.div`
	position: absolute;
	left: 703px;
	top: 434px;
	width: 222px;
	height: 124px;
	display: flex;
	flex-direction: column;
	background: #fff;
	border: 1px solid #6f6f6f;
`

const DialogTitle = styled.div`
	position: relative;
	height: 29px;
	padding-left: 8px;
	display: flex;
	align-items: center;
	gap: 5px;
	font-size: 12px;
`

const DialogClose = styled.span`
	position: absolute;
	right: 10px;
	top: 9px;
	display: flex;
`

const DialogBody = styled.div`
	height: 50px;
	padding: 0 0 0 11px;
	display: flex;
	gap: 17px;
	align-items: flex-start;
	span {
		margin-top: 12px;
	}
	svg {
		margin-top: 13px;
	}
`

const DialogFooter = styled.div`
	flex: 1;
	display: flex;
	align-items: center;
	justify-content: flex-end;
	padding-right: 12px;
	background: #f0f0f0;
	border-top: 1px solid #dfdfdf;
`

const OkButton = styled.div`
	width: 73px;
	height: 20px;
	display: flex;
	align-items: center;
	justify-content: center;
	background: #e1e1e1;
	border: 2px solid #0078d7;
`

export default App
